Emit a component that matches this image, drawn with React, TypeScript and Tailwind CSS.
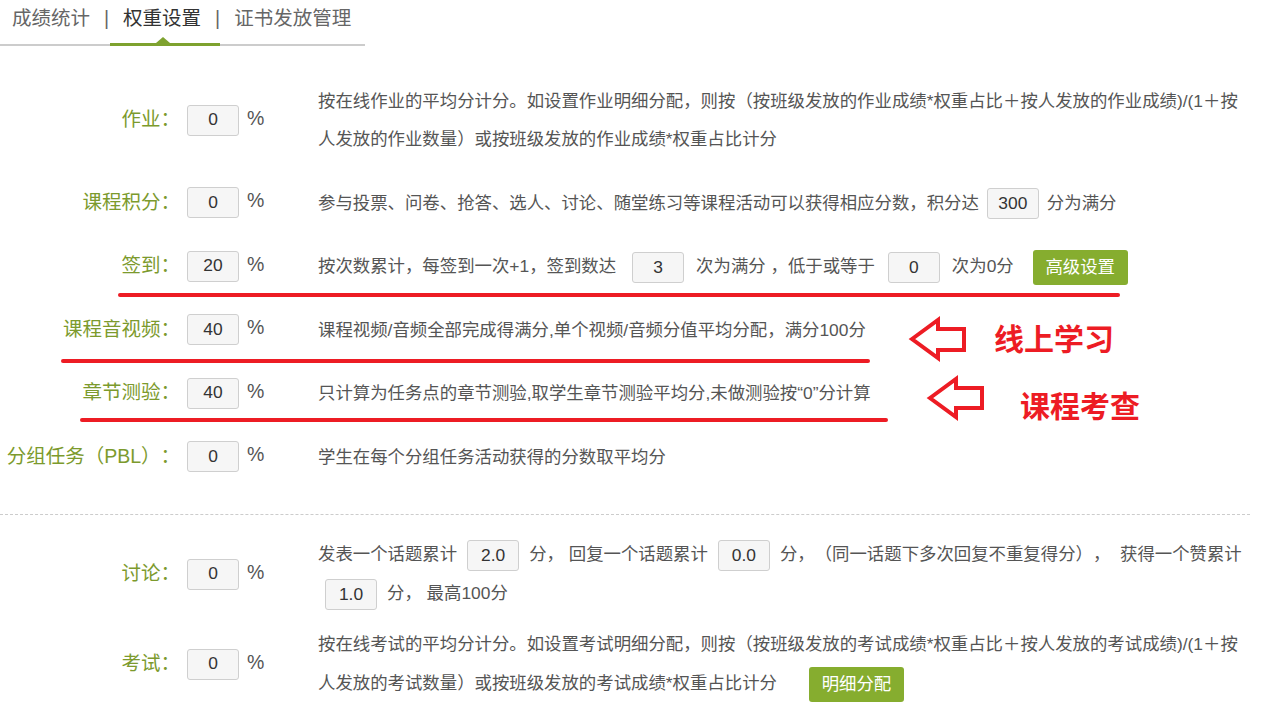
import React from "react";

const FONT = "font-['Liberation_Sans','Noto_Sans_CJK_SC',sans-serif]";

function Box({ v, cls = "" }: { v: string; cls?: string }) {
  return (
    <span
      className={`inline-flex items-center justify-center w-[52px] h-[31px] border border-[#cfcfcf] rounded-[3px] bg-[#f6f6f6] text-[#333] text-[17.4px] leading-none align-middle ${cls}`}
    >
      {v}
    </span>
  );
}

function Btn({ t, cls = "" }: { t: string; cls?: string }) {
  return (
    <span
      className={`inline-flex items-center justify-center w-[95px] h-[35px] rounded-[3px] bg-[#86ad2f] text-white text-[17.4px] leading-none align-middle ${cls}`}
    >
      {t}
    </span>
  );
}

function Row({
  label,
  value,
  children,
  lh = "leading-[38px]",
  cls = "",
}: {
  label: string;
  value: string;
  children: React.ReactNode;
  lh?: string;
  cls?: string;
}) {
  return (
    <div className={`flex items-center ${cls}`}>
      <div className="w-[180px] shrink-0 text-right text-[19.5px] text-[#7c9a2d] whitespace-nowrap">
        {label}
      </div>
      <div className="w-[138px] shrink-0 flex items-center pl-[7px]">
        <Box v={value} />
        <span className="ml-[8px] text-[19.5px] text-[#555] leading-none -mt-[3px]">%</span>
      </div>
      <div className={`text-[17.4px] text-[#555] ${lh} whitespace-nowrap`}>{children}</div>
    </div>
  );
}

export default function App() {
  return (
    <div className={`relative w-[1263px] h-[708px] overflow-hidden bg-white [text-spacing-trim:space-all] ${FONT}`}>
      {/* Tabs */}
      <div className="relative w-[365px] h-[46px] border-b-2 border-[#cccccc]">
        <div className="flex items-center h-[38px] text-[19.5px] whitespace-nowrap">
          <span className="ml-[12px] text-[#666]">成绩统计</span>
          <span className="mx-[14px] text-[#666]">|</span>
          <span className="text-[#333]">权重设置</span>
          <span className="mx-[14px] text-[#666]">|</span>
          <span className="text-[#666]">证书发放管理</span>
        </div>
        <div className="absolute left-[110px] -bottom-[2px] w-[110px] h-[3px] bg-[#7ea22f]" />
        <div className="absolute left-[156px] bottom-[1px] w-0 h-0 border-x-[7px] border-x-transparent border-b-[6px] border-b-[#7ea22f]" />
      </div>

      {/* Section 1 */}
      <div className="mt-[36px] flex flex-col gap-[25.5px]">
        <Row label="作业：" value="0">
          按在线作业的平均分计分。如设置作业明细分配，则按（按班级发放的作业成绩*权重占比＋按人发放的作业成绩)/(1＋按
          <br />
          人发放的作业数量）或按班级发放的作业成绩*权重占比计分
        </Row>
        <Row label="课程积分：" value="0">
          参与投票、问卷、抢答、选人、讨论、随堂练习等课程活动可以获得相应分数，积分达
          <Box v="300" cls="mx-[8px]" />
          分为满分
        </Row>
        <Row label="签到：" value="20">
          按次数累计，每签到一次+1，签到数达
          <Box v="3" cls="ml-[16px] mr-[12px]" />
          次为满分 ，低于或等于
          <Box v="0" cls="ml-[13px] mr-[12px]" />
          次为0分
          <Btn t="高级设置" cls="ml-[19px]" />
        </Row>
        <Row label="课程音视频：" value="40">
          课程视频/音频全部完成得满分,单个视频/音频分值平均分配，满分100分
        </Row>
        <Row label="章节测验：" value="40">
          只计算为任务点的章节测验,取学生章节测验平均分,未做测验按“0”分计算
        </Row>
        <Row label="分组任务（PBL）：" value="0">
          学生在每个分组任务活动获得的分数取平均分
        </Row>
      </div>

      <div className="mt-[38.5px] w-[1250px] border-t border-dashed border-[#cccccc]" />

      {/* Section 2 */}
      <Row label="讨论：" value="0" lh="leading-[39px]" cls="mt-[20px]">
        发表一个话题累计
        <Box v="2.0" cls="mx-[10px]" />
        分， 回复一个话题累计
        <Box v="0.0" cls="mx-[10px]" />
        分，（同一话题下多次回复不重复得分），{"\u00a0\u00a0"}获得一个赞累计
        <br />
        <Box v="1.0" cls="ml-[7px] mr-[10px]" />
        分， 最高100分
      </Row>
      <Row label="考试：" value="0" lh="leading-[39px]" cls="mt-[12px]">
        按在线考试的平均分计分。如设置考试明细分配，则按（按班级发放的考试成绩*权重占比＋按人发放的考试成绩)/(1＋按
        <br />
        人发放的考试数量）或按班级发放的考试成绩*权重占比计分
        <Btn t="明细分配" cls="ml-[32px]" />
      </Row>

      {/* Annotations */}
      <svg
        className="absolute left-0 top-0 pointer-events-none"
        width="1263"
        height="708"
        viewBox="0 0 1263 708"
      >
        <g stroke="#ed1c24" strokeWidth="4" strokeLinecap="round">
          <line x1="120" y1="295" x2="1118" y2="295" />
          <line x1="63" y1="361" x2="868" y2="361" />
          <line x1="82" y1="420" x2="886" y2="420" />
        </g>
        <g fill="none" stroke="#ed1c24" strokeWidth="4" strokeLinejoin="miter">
          <polygon points="912,339 938,320 938,329 964,329 964,350 938,350 938,358" />
          <polygon points="930,398 956,379 956,388 982,388 982,408 956,408 956,417" />
        </g>
      </svg>
      <div className="absolute left-[994px] top-[322px] text-[30px] leading-none font-bold text-[#ed1c24] font-['Noto_Sans_CJK_SC',sans-serif]">
        线上学习
      </div>
      <div className="absolute left-[1020px] top-[389px] text-[30px] leading-none font-bold text-[#ed1c24] font-['Noto_Sans_CJK_SC',sans-serif]">
        课程考查
      </div>
    </div>
  );
}
